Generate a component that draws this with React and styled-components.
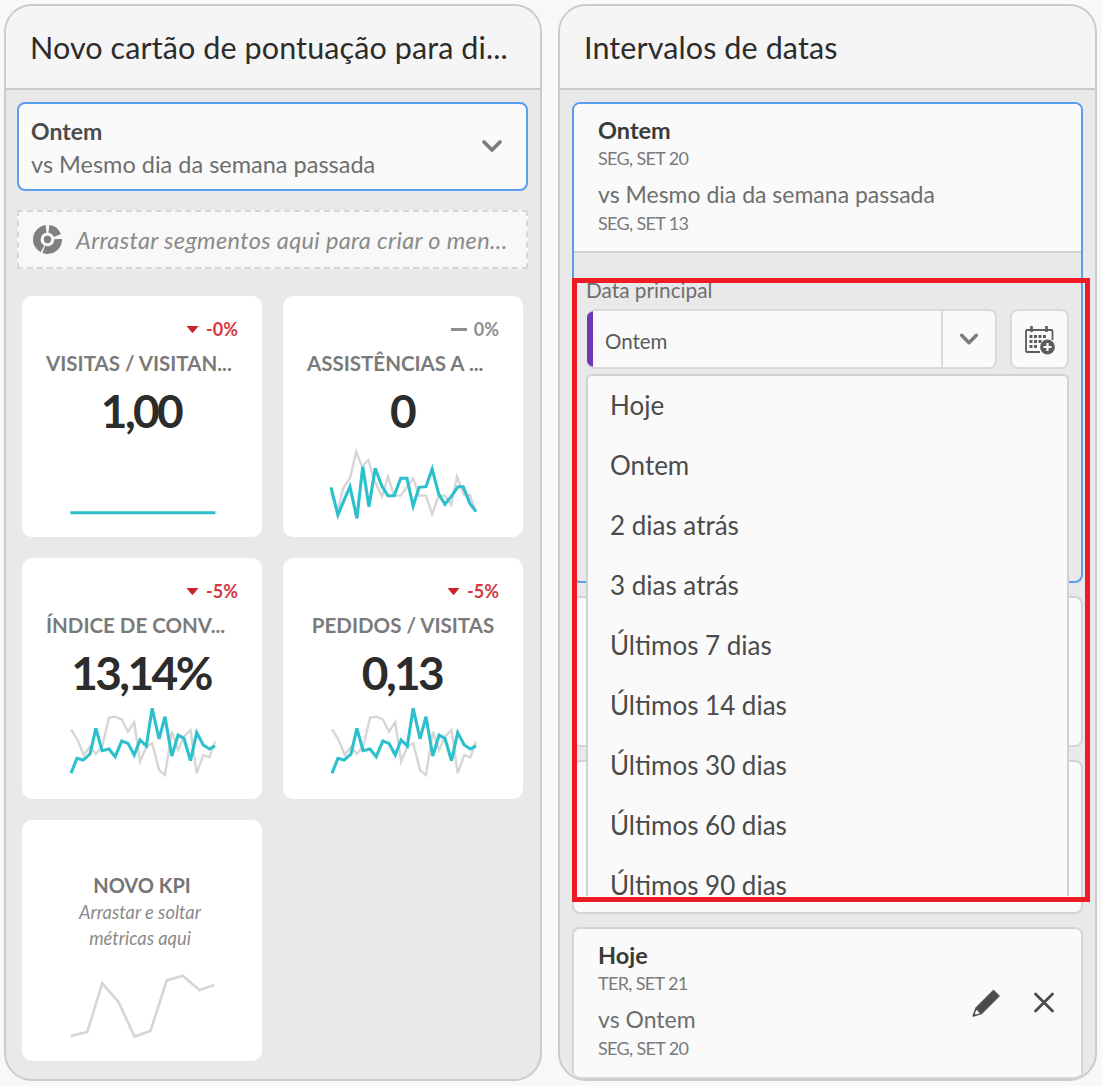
import React from "react";
import styled, { createGlobalStyle } from "styled-components";

const Global = createGlobalStyle`
  html, body { margin: 0; padding: 0; background: #f8f8f8; }
  * { box-sizing: border-box; }
  body { font-family: "Lato", "Open Sans", sans-serif; }
`;

const Page = styled.div`
  position: relative;
  width: 1102px;
  height: 1086px;
  display: flex;
  gap: 16px;
  padding: 4px 5px 5px 4px;
`;
const Panel = styled.section`
  width: ${(p) => p.$width}px;
  height: 100%;
  display: flex;
  flex-direction: column;
  border: 2px solid #cbcbcb;
  border-radius: 28px;
  overflow: hidden;
  background: #e9e9e9;
`;
const PanelHeader = styled.header`
  height: 84px;
  flex: none;
  padding: 0 0 1px 24px;
  display: flex;
  align-items: center;
  background: #f5f5f5;
  border-bottom: 2px solid #c9c9c9;
  font-size: 30.5px;
  letter-spacing: 0.1px;
  color: #2c2c2c;
`;
const LeftBody = styled.div`
  flex: 1;
  padding: 12px 12px 0 11px;
  display: flex;
  flex-direction: column;
`;
const Selector = styled.div`
  height: 89px;
  flex: none;
  border: 2px solid #5a9eee;
  border-radius: 8px;
  background: #fafafa;
  padding: 2px 22px 0 12px;
  display: flex;
  align-items: center;
  justify-content: space-between;
`;
const SelectorArrow = styled.div`
  margin-top: -4px;
`;
const SelectorTitle = styled.div`
  font-size: 23px;
  font-weight: 700;
  color: #4b4b4b;
  line-height: 32px;
`;
const SelectorSub = styled.div`
  font-size: 23.5px;
  color: #6e6e6e;
  line-height: 34px;
`;
const DropZone = styled.div`
  margin-top: 19px;
  height: 59px;
  flex: none;
  border: 2px dashed #d6d6d6;
  background: #f8f8f8;
  padding: 0 0 0 13px;
  display: flex;
  align-items: center;
  gap: 13px;
  font-size: 23.5px;
  letter-spacing: 0.35px;
  font-style: italic;
  color: #8a8a8a;
  white-space: nowrap;
`;
const KpiGrid = styled.div`
  margin: 27px 0 0 5px;
  display: grid;
  grid-template-columns: 240px 240px;
  grid-auto-rows: 241px;
  column-gap: 21px;
  row-gap: 21px;
`;
const KpiCard = styled.div`
  background: #fff;
  border-radius: 10px;
  padding-top: 23px;
  display: flex;
  flex-direction: column;
  align-items: center;
`;
const Delta = styled.div`
  align-self: flex-end;
  height: 20px;
  padding-right: 24px;
  display: flex;
  align-items: center;
  gap: 7px;
  font-size: 18px;
  font-weight: 700;
  color: ${(p) => (p.$flat ? "#8e8e8e" : "#d7373f")};
`;
const KpiTitle = styled.div`
  margin: 12px 0 0 ${(p) => (p.$clipped ? "24px" : "0")};
  align-self: ${(p) => (p.$clipped ? "flex-start" : "center")};
  font-size: 20.5px;
  line-height: 24px;
  font-weight: 700;
  color: #7a7a7a;
  white-space: nowrap;
`;
const KpiValue = styled.div`
  margin-top: 12px;
  padding-right: 2px;
  font-size: 46px;
  letter-spacing: -2.6px;
  line-height: 48px;
  font-weight: 700;
  color: #2c2c2c;
`;
const Spark = styled.svg`
  margin-top: 12px;
  width: 145px;
  height: 72px;
  flex: none;
  overflow: visible;
`;
const NewCard = styled(KpiCard)`
  padding-top: 53px;
`;
const NewTitle = styled.div`
  font-size: 20px;
  line-height: 24px;
  font-weight: 700;
  color: #757575;
`;
const NewHint = styled.div`
  margin-top: 2px;
  padding-right: 4px;
  font-size: 18.3px;
  line-height: 26px;
  font-style: italic;
  color: #8a8a8a;
  text-align: center;
`;
const NewSpark = styled.svg`
  margin-top: 20px;
  width: 149px;
  height: 70px;
  flex: none;
`;

const RightBody = styled.div`
  flex: 1;
  min-height: 0;
  padding: 12px 12px 0 12px;
  display: flex;
  flex-direction: column;
  gap: 13px;
`;
const RangeCard = styled.div`
  position: relative;
  flex: none;
  height: ${(p) => p.$height}px;
  border: 2px solid ${(p) => (p.$active ? "#5a9eee" : "#d4d4d4")};
  border-radius: 8px;
  background: ${(p) => (p.$active ? "#e9e9e9" : "#fafafa")};
`;
const RangeSummary = styled.div`
  height: ${(p) => (p.$divider ? "149px" : "146px")};
  padding: ${(p) => (p.$divider ? "7px" : "9px")} 25px 0 24px;
  display: flex;
  align-items: center;
  justify-content: space-between;
  background: #fafafa;
  border-radius: 6px 6px 0 0;
  border-bottom: ${(p) => (p.$divider ? "2px solid #d4d4d4" : "0")};
`;
const RangeSummaryCol = styled.div`
  margin-top: -14px;
`;
const RangeTitle = styled.div`
  font-size: 23.5px;
  line-height: 32px;
  font-weight: 700;
  color: #3a3a3a;
`;
const RangeDate = styled.div`
  font-size: 18px;
  line-height: 24px;
  color: #7a7a7a;
  letter-spacing: -0.65px;
`;
const RangeCompare = styled.div`
  margin-top: 7px;
  font-size: 23px;
  line-height: 34px;
  color: #6e6e6e;
`;
const Actions = styled.div`
  display: flex;
  align-items: center;
  gap: 32px;
  margin-top: -8px;
`;
const IconSvg = styled.svg`
  width: ${(p) => p.$size}px;
  height: ${(p) => p.$size}px;
  flex: none;
  display: block;
`;
const Expanded = styled.div`
  padding: 25px 12px 0 12px;
`;
const FieldLabel = styled.div`
  font-size: 20.8px;
  line-height: 24px;
  color: #6e6e6e;
`;
const FieldRow = styled.div`
  margin-top: 7px;
  display: flex;
  gap: 13px;
`;
const DateSelect = styled.div`
  width: 410px;
  height: 60px;
  margin-left: 1px;
  display: flex;
  border: 2px solid #dadada;
  border-left: 0;
  border-radius: 8px;
  background: #fafafa;
  overflow: hidden;
`;
const ColorTag = styled.div`
  width: 6px;
  background: #6e37b8;
  flex: none;
`;
const DateValue = styled.div`
  flex: 1;
  padding: 3px 0 0 12px;
  display: flex;
  align-items: center;
  font-size: 20.5px;
  color: #5a5a5a;
`;
const DateChevron = styled.div`
  width: 54px;
  flex: none;
  border-left: 2px solid #dadada;
  display: flex;
  align-items: center;
  justify-content: center;
`;
const CalButton = styled.div`
  width: 59px;
  height: 60px;
  border: 2px solid #dadada;
  border-radius: 8px;
  background: #fafafa;
  display: flex;
  align-items: center;
  justify-content: center;
`;
const Menu = styled.div`
  position: absolute;
  left: 12px;
  top: 270px;
  width: 483px;
  height: 522px;
  background: #fafafa;
  border: 2px solid #d2d2d2;
  border-bottom: 0;
  border-radius: 6px 6px 0 0;
  overflow: hidden;
  z-index: 2;
`;
const MenuItem = styled.div`
  height: 60px;
  padding-left: 22px;
  display: flex;
  align-items: center;
  font-size: 26px;
  color: #4b4b4b;
  margin-top: ${(p) => (p.$first ? "-1px" : "0")};
`;
const RedBox = styled.div`
  position: absolute;
  left: 572px;
  top: 278px;
  width: 518px;
  height: 624px;
  border: 5px solid #ed1c24;
  pointer-events: none;
  z-index: 3;
`;

const Chevron = ({ size = 24, color = "#7d7d7d" }) => (
  <IconSvg $size={size} viewBox="0 0 24 24">
    <polyline points="4,8 12,16 20,8" fill="none" stroke={color} strokeWidth="3.8" strokeLinecap="round" strokeLinejoin="round" />
  </IconSvg>
);
const SegmentIcon = () => (
  <IconSvg $size={31} viewBox="0 0 32 32">
    <g fill="none" stroke="#808080" strokeWidth="8">
      <path d="M17.5 5.1 A11 11 0 0 1 26.2 11.9" />
      <path d="M27 15.6 A11 11 0 0 1 12.2 26.3" />
      <path d="M10.8 25.7 A11 11 0 0 1 14.5 5.1" />
    </g>
    <circle cx="16" cy="16" r="3.8" fill="#808080" />
  </IconSvg>
);
const CalendarPlus = () => (
  <IconSvg $size={34} viewBox="0 0 34 34">
    <path d="M8.5 4v6M23.5 4v6" stroke="#5c5c5c" strokeWidth="2.6" />
    <path d="M17 30H4a1 1 0 0 1-1-1V9a1 1 0 0 1 1-1h24.5a1 1 0 0 1 1 1v9" fill="none" stroke="#5c5c5c" strokeWidth="1.8" />
    <g fill="#5c5c5c">
      <rect x="6.5" y="13" width="3" height="3" /><rect x="11" y="13" width="3" height="3" /><rect x="15.5" y="13" width="3" height="3" /><rect x="20" y="13" width="3" height="3" />
      <rect x="6.5" y="18" width="3" height="3" /><rect x="11" y="18" width="3" height="3" /><rect x="15.5" y="18" width="3" height="3" />
      <rect x="6.5" y="23" width="3" height="3" /><rect x="11" y="23" width="3" height="3" />
    </g>
    <circle cx="24.5" cy="25" r="7.4" fill="#5c5c5c" />
    <path d="M24.5 21v8M20.5 25h8" stroke="#fafafa" strokeWidth="2.2" />
  </IconSvg>
);
const Pencil = () => (
  <IconSvg $size={28} viewBox="0 0 28 28">
    <path d="M21.5 1 L27.5 7 L10 24.5 L4 18.5 Z" fill="#4b4b4b" strokeLinejoin="round" stroke="#4b4b4b" strokeWidth="0.8" />
    <path d="M4 19.2 L9.4 24.6 L1.2 27 Z" fill="#fafafa" stroke="#4b4b4b" strokeWidth="1.5" strokeLinejoin="round" />
    <path d="M1 27.2 L1.9 24 L4.2 26.2 Z" fill="#4b4b4b" />
  </IconSvg>
);
const Close = () => (
  <IconSvg $size={24} viewBox="0 0 24 24">
    <path d="M3.5 3 L20.5 20 M20.5 3 L3.5 20" stroke="#4b4b4b" strokeWidth="2.8" strokeLinecap="round" />
  </IconSvg>
);
const Down = () => (
  <IconSvg $size={13} viewBox="0 0 13 8">
    <path d="M0.5 0.5 H12.5 L7.2 7 Q6.5 7.7 5.8 7 Z" fill="#c9252d" />
  </IconSvg>
);
const DashMark = styled.span`
  width: 16px;
  height: 3px;
  flex: none;
  background: #8e8e8e;
`;

const greyA = "960,610 980,660 995,595 1015,565 1033,485 1050,530 1068,510 1085,570 1108,620 1125,560 1143,617 1162,617 1198,565 1215,617 1235,617 1253,672 1272,617 1290,617 1308,645 1325,560 1345,615 1362,615 1380,665";
const tealA = "960,592 980,675 1000,625 1015,590 1035,685 1052,530 1070,650 1088,535 1108,590 1125,617 1143,617 1162,565 1180,565 1198,648 1215,592 1235,590 1253,537 1272,612 1290,643 1310,617 1328,590 1343,590 1362,640 1380,665";
const greyB = "203,538 222,570 240,615 258,590 275,612 293,590 313,503 331,500 350,508 368,545 386,517 403,635 421,590 438,580 458,660 475,675 495,545 513,600 530,560 549,540 567,670 586,615 604,622 620,575";
const tealB = "203,670 220,625 238,630 258,612 275,535 293,602 313,597 331,620 350,573 368,580 386,615 403,570 421,588 438,475 458,567 475,500 495,618 513,555 530,565 549,632 567,548 586,585 604,597 620,587";

const kpis = [
  { delta: "-0%", title: "VISITAS / VISITAN...", clipped: true, value: "1,00", box: "200 471 420 216", teal: "201,668 621,668" },
  { delta: "0%", flat: true, title: "ASSISTÊNCIAS A ...", clipped: true, value: "0", box: "960 471 420 216", grey: greyA, teal: tealA },
  { delta: "-5%", title: "ÍNDICE DE CONV...", clipped: true, value: "13,14%", box: "200 477 420 216", grey: greyB, teal: tealB },
  { delta: "-5%", title: "PEDIDOS / VISITAS", value: "0,13", box: "200 477 420 216", grey: greyB, teal: tealB },
];
const options = ["Hoje", "Ontem", "2 dias atrás", "3 dias atrás", "Últimos 7 dias", "Últimos 14 dias", "Últimos 30 dias", "Últimos 60 dias", "Últimos 90 dias"];

export default function App() {
  return (
    <Page>
      <Global />
      <Panel $width={538}>
        <PanelHeader>Novo cartão de pontuação para di...</PanelHeader>
        <LeftBody>
          <Selector>
            <div>
              <SelectorTitle>Ontem</SelectorTitle>
              <SelectorSub>vs Mesmo dia da semana passada</SelectorSub>
            </div>
            <SelectorArrow>
              <Chevron />
            </SelectorArrow>
          </Selector>
          <DropZone>
            <SegmentIcon />
            Arrastar segmentos aqui para criar o men...
          </DropZone>
          <KpiGrid>
            {kpis.map((k) => (
              <KpiCard key={k.title}>
                <Delta $flat={k.flat}>
                  {k.flat ? <DashMark /> : <Down />}
                  {k.delta}
                </Delta>
                <KpiTitle $clipped={k.clipped}>{k.title}</KpiTitle>
                <KpiValue>{k.value}</KpiValue>
                <Spark viewBox={k.box} preserveAspectRatio="none">
                  {k.grey && <polyline points={k.grey} fill="none" stroke="#d6d6d6" strokeWidth="7" />}
                  <polyline points={k.teal} fill="none" stroke="#2bc0cc" strokeWidth="9" />
                </Spark>
              </KpiCard>
            ))}
            <NewCard>
              <NewTitle>NOVO KPI</NewTitle>
              <NewHint>
                Arrastar e soltar
                <br />
                métricas aqui
              </NewHint>
              <NewSpark viewBox="200 480 448 210">
                <polyline points="208,675 258,663 303,517 352,573 400,677 448,660 497,508 545,494 595,537 640,522" fill="none" stroke="#d6d6d6" strokeWidth="8" />
              </NewSpark>
            </NewCard>
          </KpiGrid>
        </LeftBody>
      </Panel>
      <Panel $width={539}>
        <PanelHeader>Intervalos de datas</PanelHeader>
        <RightBody>
          <RangeCard $active $height={481}>
            <RangeSummary $divider>
              <RangeSummaryCol>
                <RangeTitle>Ontem</RangeTitle>
                <RangeDate>SEG, SET 20</RangeDate>
                <RangeCompare>vs Mesmo dia da semana passada</RangeCompare>
                <RangeDate>SEG, SET 13</RangeDate>
              </RangeSummaryCol>
            </RangeSummary>
            <Expanded>
              <FieldLabel>Data principal</FieldLabel>
              <FieldRow>
                <DateSelect>
                  <ColorTag />
                  <DateValue>Ontem</DateValue>
                  <DateChevron>
                    <Chevron size={22} />
                  </DateChevron>
                </DateSelect>
                <CalButton>
                  <CalendarPlus />
                </CalButton>
              </FieldRow>
            </Expanded>
            <Menu>
              {options.map((o, i) => (
                <MenuItem key={o} $first={i === 0}>
                  {o}
                </MenuItem>
              ))}
            </Menu>
          </RangeCard>
          <RangeCard $height={151} />
          <RangeCard $height={154} />
          <RangeCard $height={152}>
            <RangeSummary>
              <RangeSummaryCol>
                <RangeTitle>Hoje</RangeTitle>
                <RangeDate>TER, SET 21</RangeDate>
                <RangeCompare>vs Ontem</RangeCompare>
                <RangeDate>SEG, SET 20</RangeDate>
              </RangeSummaryCol>
              <Actions>
                <Pencil />
                <Close />
              </Actions>
            </RangeSummary>
          </RangeCard>
        </RightBody>
      </Panel>
      <RedBox />
    </Page>
  );
}
